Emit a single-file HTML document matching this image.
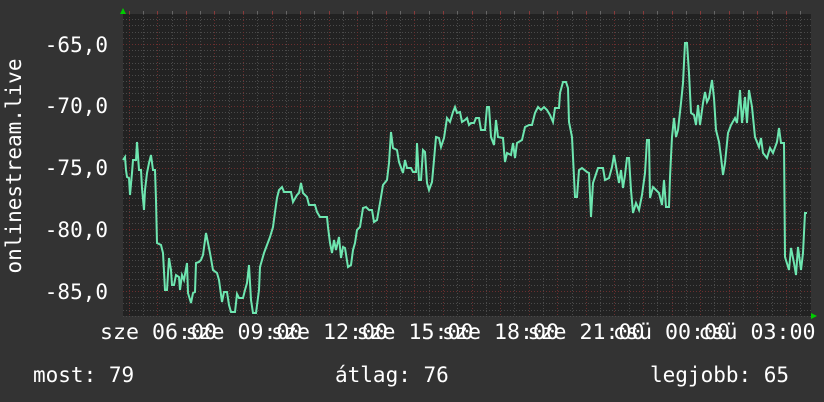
<!DOCTYPE html>
<html><head><meta charset="utf-8"><style>
html,body{margin:0;padding:0;background:#333;}
svg{display:block}
text{font-family:"DejaVu Sans Mono","Liberation Mono",monospace;fill:#fff;}
</style></head><body>
<svg width="824" height="402" viewBox="0 0 824 402" xmlns="http://www.w3.org/2000/svg">
<rect width="824" height="402" fill="#333"/>
<rect x="123" y="14" width="688" height="302" fill="#222"/>
<g id="grid"></g>
<polyline fill="none" stroke="#6ee6b0" stroke-width="2" stroke-linejoin="miter" points="123,160 125,157 126,170 127,177 129,178 130,195 132,173 133,160 136,160 137,142 139,170 141,170 142,188 144,210 145,190 147,173 149,163 151,155 153,170 155,170 156,200 157,243 161,245 163,253 165,290 167,290 169,258 171,270 172,285 174,285 176,275 179,277 180,290 182,275 184,280 187,263 188,293 191,303 193,293 195,292 196,263 199,262 201,260 203,255 206,233 208,243 210,253 213,270 217,273 219,280 222,302 224,292 227,292 229,305 231,312 235,312 237,294 239,298 243,298 245,290 247,283 249,265 251,300 253,313 256,313 259,290 260,267 264,253 267,245 270,237 273,227 275,212 277,198 279,190 282,187 284,192 291,192 293,202 297,195 299,193 301,183 303,193 305,195 307,197 309,205 315,205 317,212 320,217 327,217 328,227 330,243 332,253 334,240 336,250 339,237 341,258 343,247 345,248 348,267 351,265 353,250 355,243 357,230 360,227 363,208 366,207 369,210 372,210 374,222 377,220 380,203 383,185 387,180 389,163 391,132 393,148 397,150 399,162 403,173 405,160 407,168 411,168 413,172 416,172 417,143 419,180 421,180 423,150 425,152 427,183 429,190 432,182 434,160 436,137 439,138 441,147 444,138 447,118 450,122 453,112 455,107 457,113 460,112 462,122 465,120 467,118 469,125 471,123 474,123 476,118 479,118 481,130 485,130 487,107 489,107 491,137 494,145 496,120 498,137 503,138 505,162 507,153 511,155 513,143 515,158 517,143 522,140 525,127 529,125 532,125 535,113 538,107 541,110 544,107 547,110 550,115 553,122 555,108 559,108 560,93 563,82 566,82 568,88 569,122 572,137 575,197 577,197 579,170 582,168 587,172 589,173 591,217 593,183 598,168 603,168 605,180 609,178 612,167 614,155 617,172 619,183 621,170 623,188 625,175 627,158 629,158 631,190 633,213 636,203 639,210 642,195 645,173 647,140 649,140 650,198 653,187 656,190 659,193 662,205 664,180 666,207 669,207 670,177 672,137 674,118 676,137 678,130 681,103 683,83 685,43 687,43 689,73 691,113 694,115 696,125 698,105 700,125 703,103 705,92 707,102 709,98 712,80 714,98 716,130 719,142 721,157 723,175 725,163 728,133 731,125 735,118 737,123 740,90 742,123 745,97 747,123 749,90 752,107 755,137 759,147 761,138 763,153 767,158 770,148 773,153 777,142 779,128 781,143 784,143 785,257 789,270 791,248 794,263 796,275 798,247 801,270 803,253 805,213 807,213"/>
<polygon points="120,14 126,14 123,8" fill="#0c0"/>
<polygon points="811,313 811,319 817,316" fill="#0c0"/>
<g font-size="21" text-anchor="end">
<text x="108" y="52">-65,0</text>
<text x="108" y="113">-70,0</text>
<text x="108" y="175">-75,0</text>
<text x="108" y="237">-80,0</text>
<text x="108" y="299">-85,0</text>
</g>
<g font-size="21.6" text-anchor="middle">
<text x="158.5" y="339">sze 06:00</text>
<text x="244" y="339">sze 09:00</text>
<text x="329.5" y="339">sze 12:00</text>
<text x="415" y="339">sze 15:00</text>
<text x="500.5" y="339">sze 18:00</text>
<text x="586" y="339">sze 21:00</text>
<text x="671.5" y="339">csü 00:00</text>
<text x="757" y="339">csü 03:00</text>
</g>
<text font-size="21" transform="translate(21,166) rotate(-90)" text-anchor="middle">onlinestream.live</text>
<g font-size="21">
<text x="33" y="382">most: 79</text>
<text x="335" y="382">átlag: 76</text>
<text x="650" y="382">legjobb: 65</text>
</g>
</svg>
<script>
(function(){
var g=document.getElementById('grid'),s='';
for(var y=44-6.175*4;y<316;y+=6.175){var r=Math.round(y);if(r<15)continue;
var maj=Math.abs(((y-44)/61.75)-Math.round((y-44)/61.75))<0.01;
s+='<line x1="123" x2="811" y1="'+(r+0.5)+'" y2="'+(r+0.5)+'" stroke="'+(maj?'#6a2e2e':'#4a4a4a')+'" stroke-dasharray="1,2"/>';}
for(var k=-2;k<50;k++){var x=157.3+k*14.285;if(x<124||x>810)continue;var maj=(k%2==0);var rx=Math.round(x)+0.5;
s+='<line y1="14" y2="316" x1="'+rx+'" x2="'+rx+'" stroke="'+(maj?'#6a2e2e':'#4a4a4a')+'" stroke-dasharray="1,2"/>';
s+='<line y1="11" y2="14" x1="'+rx+'" x2="'+rx+'" stroke="'+(maj?'#8a3a3a':'#666')+'"/>';}
g.innerHTML=s;
})();
</script>
</body></html>
